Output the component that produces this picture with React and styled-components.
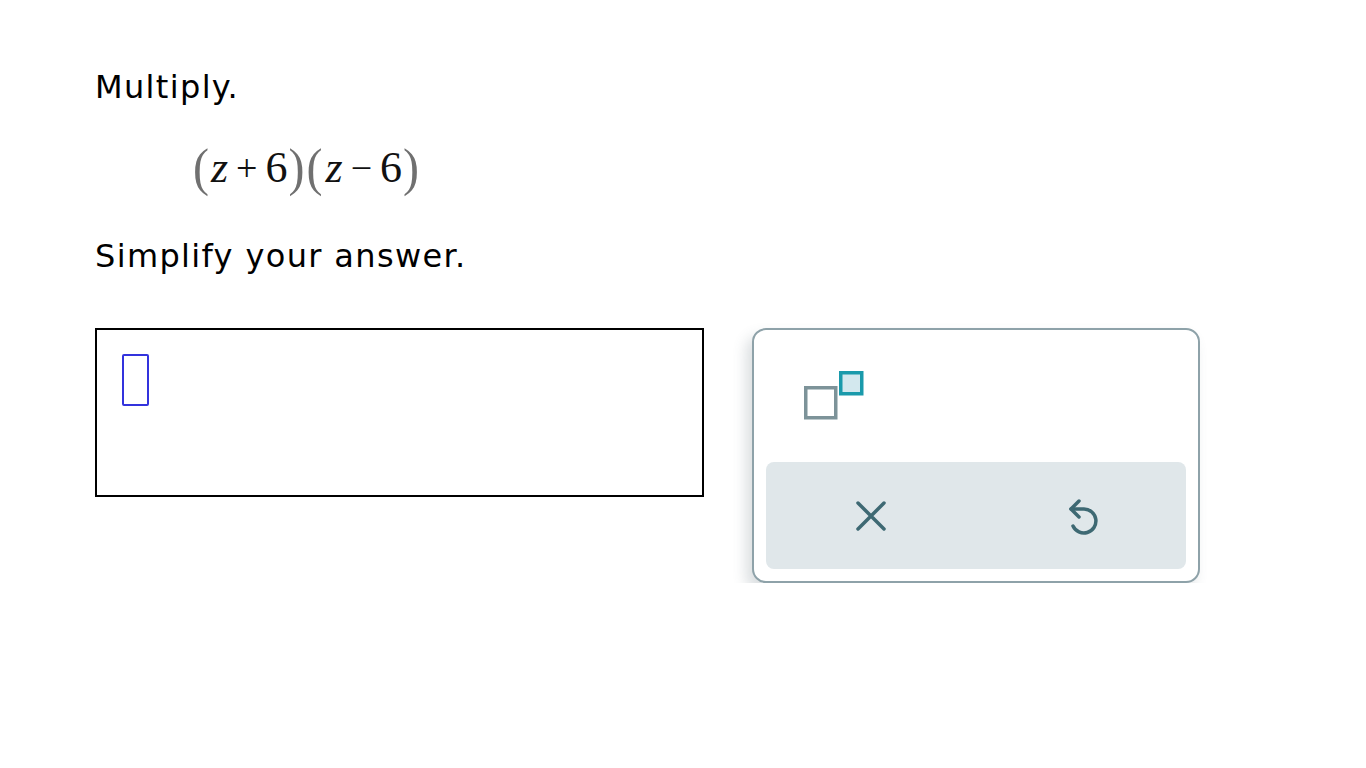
import styled, { createGlobalStyle } from 'styled-components';

const Global = createGlobalStyle`
  body {
    margin: 0;
    background: #fff;
    font-family: "DejaVu Sans", Verdana, sans-serif;
    color: #000;
  }
`;

const Page = styled.div`
  padding: 63px 0 0 95px;
`;

const Prompt = styled.p`
  margin: 0;
  font-size: 32px;
  line-height: 48px;
  letter-spacing: 1.35px;
`;

const MathLine = styled.div`
  margin: 29px 0 36px 98px;
  font-family: "Liberation Serif", "Times New Roman", serif;
  font-size: 44px;
  line-height: 56px;
  color: #111;
  display: flex;
  align-items: center;
`;

const Paren = styled.span`
  font-size: 48px;
  color: #707070;
  transform: scaleY(1.08);
  margin: 0 ${p => p.$gap || 0}px;
`;

const Var = styled.i`
  font-style: italic;
  margin-left: 2px;
`;

const Op = styled.span`
  margin: 0 8px;
  font-size: 38px;
`;

const Row = styled.div`
  display: flex;
  align-items: flex-start;
  gap: 48px;
  margin-top: 48px;
`;

const AnswerBox = styled.div`
  box-sizing: border-box;
  width: 609px;
  height: 169px;
  border: 2px solid #000;
  padding: 24px 0 0 25px;
`;

const Caret = styled.div`
  box-sizing: border-box;
  width: 27px;
  height: 52px;
  border: 2px solid #3333dd;
  border-radius: 2px;
`;

const Palette = styled.div`
  box-sizing: border-box;
  width: 448px;
  height: 255px;
  border: 2px solid #8ea2a9;
  border-radius: 14px;
  background: #fff;
  box-shadow: -6px 8px 14px rgba(70, 90, 100, 0.2);
  padding: 38px 12px 12px 12px;
  display: flex;
  flex-direction: column;
`;

const ToolRow = styled.div`
  height: 94px;
  padding-left: 38px;
`;

const Actions = styled.div`
  display: flex;
  height: 107px;
  background: #e0e7ea;
  border-radius: 8px;
  overflow: hidden;
`;

const ActionBtn = styled.button`
  flex: 1;
  border: none;
  background: transparent;
  display: flex;
  align-items: center;
  justify-content: center;
  padding: 0;
  cursor: pointer;
`;

function SuperscriptIcon() {
  return (
    <svg width="64" height="56" viewBox="0 0 64 56">
      <rect x="1.75" y="19.75" width="30" height="30" fill="none" stroke="#7d9399" strokeWidth="3.5" />
      <rect x="36.75" y="4.75" width="21" height="21" fill="#d3e8ee" stroke="#1a9aab" strokeWidth="3.5" />
    </svg>
  );
}

export default function App() {
  return (
    <>
      <Global />
      <Page>
        <Prompt>Multiply.</Prompt>
        <MathLine>
          <Paren>(</Paren>
          <Var>z</Var>
          <Op>+</Op>
          <span>6</span>
          <Paren $gap={1}>)</Paren>
          <Paren $gap={1}>(</Paren>
          <Var>z</Var>
          <Op>−</Op>
          <span>6</span>
          <Paren $gap={1}>)</Paren>
        </MathLine>
        <Prompt>Simplify your answer.</Prompt>
        <Row>
          <AnswerBox>
            <Caret />
          </AnswerBox>
          <Palette>
            <ToolRow>
              <SuperscriptIcon />
            </ToolRow>
            <Actions>
              <ActionBtn aria-label="clear">
                <svg width="34" height="34" viewBox="0 0 34 34">
                  <path d="M4 4 L30 30 M30 4 L4 30" stroke="#3e6973" strokeWidth="3.5" strokeLinecap="round" />
                </svg>
              </ActionBtn>
              <ActionBtn aria-label="undo">
                <svg width="36" height="44" viewBox="0 0 36 44">
                  <path d="M8 15 H21 A12 12 0 1 1 10 32" fill="none" stroke="#3e6973" strokeWidth="3.5" strokeLinecap="round" />
                  <path d="M16 7 L8 15 L16 23" fill="none" stroke="#3e6973" strokeWidth="3.5" strokeLinecap="round" strokeLinejoin="round" />
                </svg>
              </ActionBtn>
            </Actions>
          </Palette>
        </Row>
      </Page>
    </>
  );
}
